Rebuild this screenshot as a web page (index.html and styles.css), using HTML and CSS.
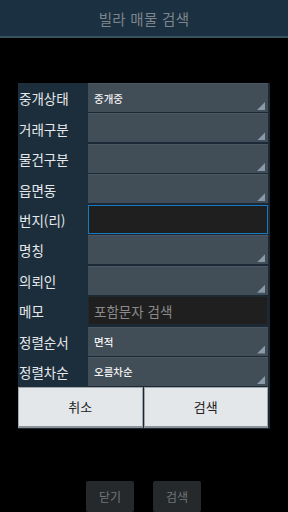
FILE: index.html
```html
<!DOCTYPE html>
<html lang="ko">
<head>
<meta charset="utf-8">
<link rel="stylesheet" href="styles.css">
</head>
<body>
<header class="titlebar">빌라 매물 검색</header>
<main class="content">
  <section class="dialog">
    <div class="form">
      <div class="label">중개상태</div>
      <div class="field select"><span class="value">중개중</span><i class="arrow"></i></div>
      <div class="label">거래구분</div>
      <div class="field select"><i class="arrow"></i></div>
      <div class="label">물건구분</div>
      <div class="field select"><i class="arrow"></i></div>
      <div class="label">읍면동</div>
      <div class="field select"><i class="arrow"></i></div>
      <div class="label">번지(리)</div>
      <div class="field input focused"></div>
      <div class="label">명칭</div>
      <div class="field select"><i class="arrow"></i></div>
      <div class="label">의뢰인</div>
      <div class="field select"><i class="arrow"></i></div>
      <div class="label">메모</div>
      <div class="field input"><span class="placeholder">포함문자 검색</span></div>
      <div class="label">정렬순서</div>
      <div class="field select"><span class="value">면적</span><i class="arrow"></i></div>
      <div class="label">정렬차순</div>
      <div class="field select"><span class="value">오름차순</span><i class="arrow"></i></div>
    </div>
    <div class="actions">
      <button class="btn">취소</button>
      <button class="btn">검색</button>
    </div>
  </section>
</main>
<footer class="bottombar">
  <button class="dim-btn">닫기</button>
  <button class="dim-btn">검색</button>
</footer>
</body>
</html>
```
FILE: styles.css
```css
* { box-sizing: border-box; }
html, body {
  margin: 0;
  padding: 0;
  background: #000;
  width: 288px;
  height: 512px;
  overflow: hidden;
  font-family: "Noto Sans CJK KR", "Noto Sans", sans-serif;
}
.titlebar {
  height: 38px;
  background: #1b3040;
  border-bottom: 2px solid #35525f;
  color: #7d868d;
  font-size: 14.5px;
  display: flex;
  align-items: center;
  justify-content: center;
  letter-spacing: 0.3px;
}
.content {
  padding-top: 45px;
  height: 443px;
}
.dialog {
  margin-left: 18px;
  width: 252px;
  background: #1a2935;
  padding-right: 2px;
}
.form {
  display: grid;
  grid-template-columns: 70px 180px;
  grid-auto-rows: 29px;
  row-gap: 1.44px;
  background: #1a2935;
}
.label {
  background: #1c2e3c;
  color: #e6e8ea;
  font-size: 13.5px;
  display: flex;
  align-items: center;
  padding-left: 1px;
  margin-bottom: -1.44px;
  height: calc(100% + 1.44px);
}
.field {
  position: relative;
  display: flex;
  align-items: center;
  padding-left: 6px;
}
.select {
  background: #414d57;
  border-top: 1px solid #4b5862;
}
.value {
  color: #f2f2f2;
  font-size: 10.5px;
  font-weight: 500;
}
.arrow {
  position: absolute;
  right: 3px;
  bottom: 2px;
  width: 8px;
  height: 8px;
  background: #8a9aaa;
  clip-path: polygon(100% 0, 100% 100%, 0 100%);
}
.input {
  background: #1f1f1f;
  border: 1px solid #1f2a30;
  padding-left: 5px;
}
.focused {
  border: 1.5px solid #1878c0;
}
.placeholder {
  color: #8a8a8a;
  font-size: 13.5px;
}
.actions {
  display: flex;
  padding-top: 1px;
  padding-bottom: 1px;
  background: #1a2935;
}
.btn {
  flex: 1;
  height: 41px;
  margin: 0;
  background: #e3e7e9;
  border: 1px solid #a0a6aa;
  border-bottom: 2px solid #8c9296;
  color: #222;
  font-family: "Noto Sans CJK KR", "Noto Sans", sans-serif;
  font-size: 13px;
}
.btn + .btn { margin-left: 1px; }
.bottombar {
  display: flex;
  gap: 19px;
  padding-left: 86px;
  height: 31px;
}
.dim-btn {
  width: 48px;
  height: 31px;
  margin: 0;
  background: #25292b;
  border: none;
  border-radius: 2px;
  color: #70767a;
  font-family: "Noto Sans CJK KR", "Noto Sans", sans-serif;
  font-size: 12px;
  padding: 0;
}
```
